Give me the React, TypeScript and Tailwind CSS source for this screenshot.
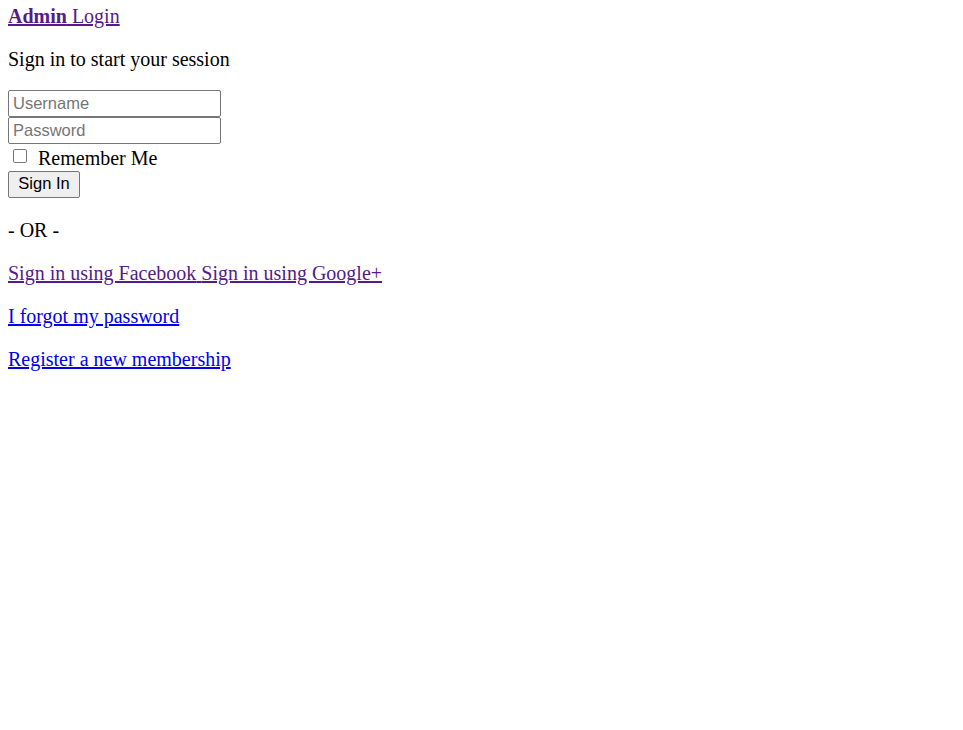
import React from "react";

export default function App() {
  const serif = { fontFamily: '"Liberation Serif", "Times New Roman", serif' };
  return (
    <div
      className="min-h-[730px] w-full bg-white pl-[8px] pt-[5px] text-[20px] leading-[23px] text-black"
      style={serif}
    >
      <div>
        <a href="#" className="text-[#551A8B] underline">
          <b>Admin</b> Login
        </a>
      </div>
      <p className="mt-[20px]">Sign in to start your session</p>
      <form className="mt-[19px]" onSubmit={(e) => e.preventDefault()}>
        <div className="flex flex-col">
          <input
            type="text"
            placeholder="Username"
            className="block h-[27px] w-[213px] rounded-[2px] border border-[#767676] bg-white pl-[4px] text-[16.5px] text-black placeholder:text-[#757575] outline-none font-['Liberation_Sans',Arial,sans-serif]"
          />
          <input
            type="password"
            placeholder="Password"
            className="block h-[27px] w-[213px] rounded-[2px] border border-[#767676] bg-white pl-[4px] text-[16.5px] text-black placeholder:text-[#757575] outline-none font-['Liberation_Sans',Arial,sans-serif]"
          />
        </div>
        <div className="flex h-[27px] items-start">
          <span className="ml-[5px] mt-[5px] box-border block h-[14px] w-[14px] rounded-[2px] border border-[#767676] bg-white" />
          <span className="ml-[11px] mt-[3px]">Remember Me</span>
        </div>
        <button
          type="submit"
          className="block h-[27px] w-[72px] rounded-[2px] border border-[#767676] bg-[#efefef] pb-[2px] text-center text-[16.5px] leading-[23px] text-black font-['Liberation_Sans',Arial,sans-serif]"
        >
          Sign In
        </button>
      </form>
      <p className="mt-[21px]">- OR -</p>
      <p className="mt-[20px]">
        <a href="#" className="text-[#551A8B] underline">
          Sign in using Facebook{" "}
        </a>
        <a href="#" className="text-[#551A8B] underline">
          Sign in using Google+
        </a>
      </p>
      <p className="mt-[20px]">
        <a href="#" className="text-[#0000EE] underline">
          I forgot my password
        </a>
      </p>
      <p className="mt-[20px]">
        <a href="#" className="text-[#0000EE] underline">
          Register a new membership
        </a>
      </p>
    </div>
  );
}
